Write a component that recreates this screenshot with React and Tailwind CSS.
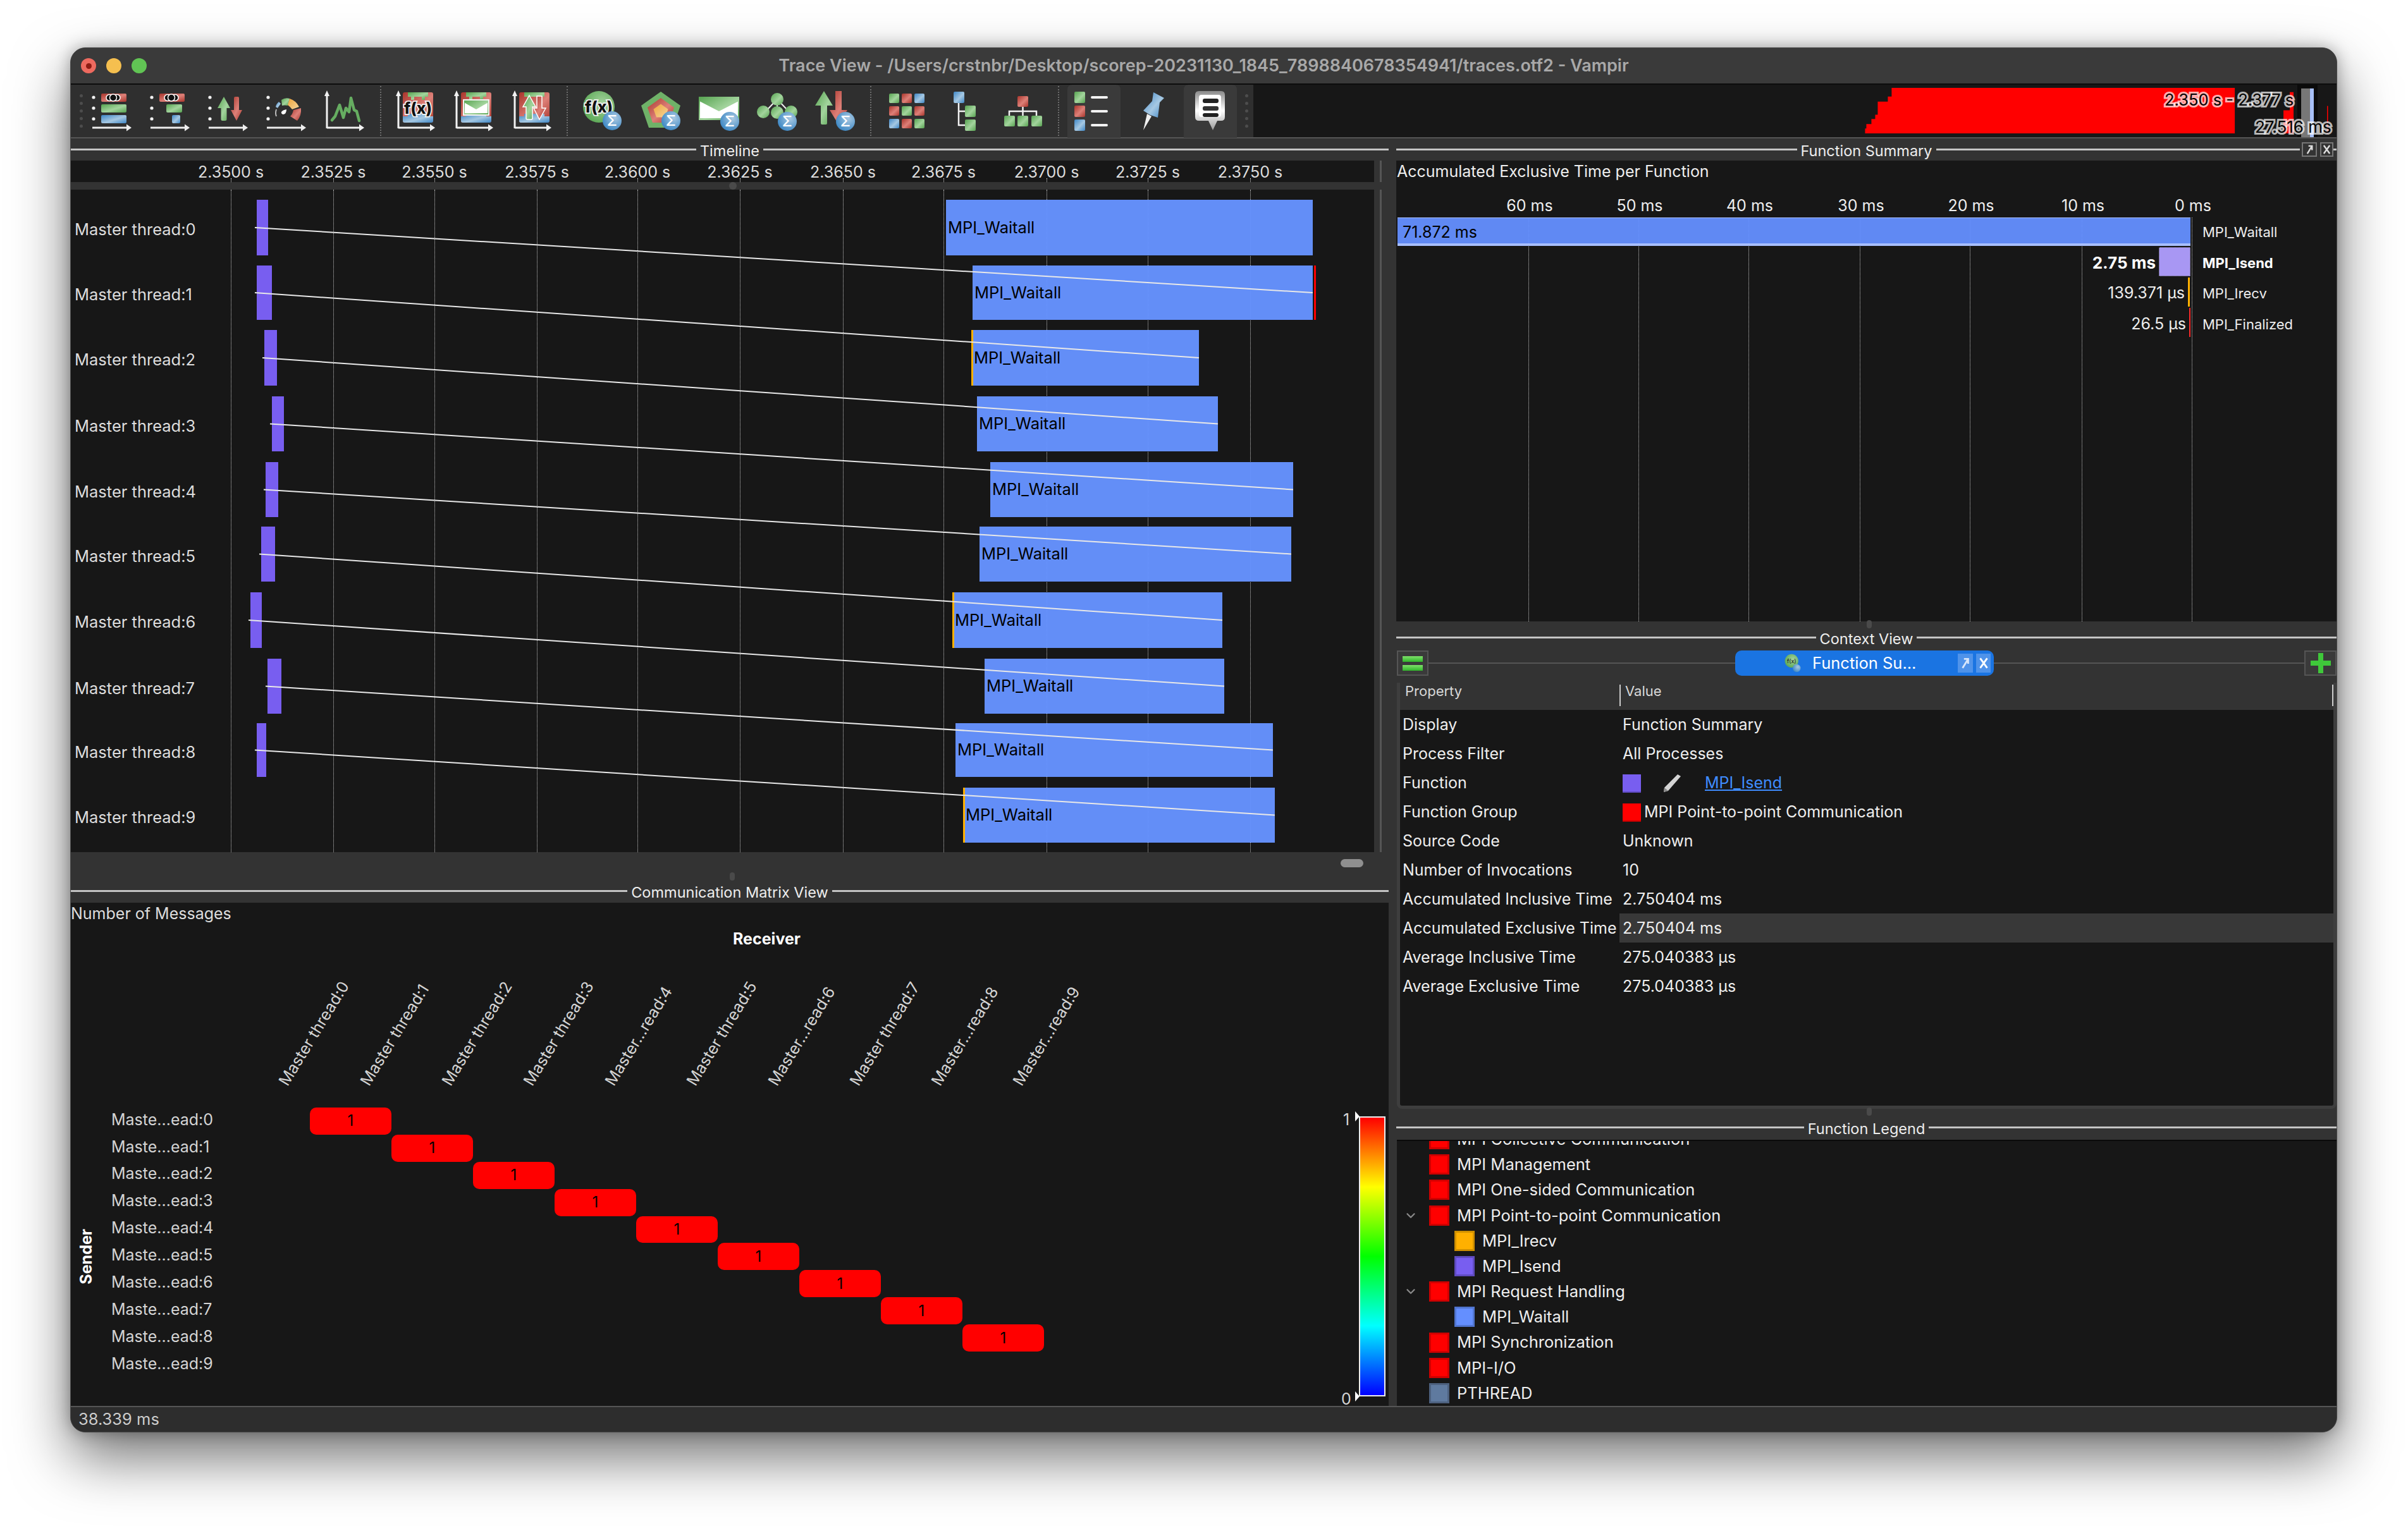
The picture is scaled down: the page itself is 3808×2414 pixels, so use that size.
import { ChevronDown } from 'lucide-react';

const TICKS = [
  ['2.3500 s', 365], ['2.3525 s', 527], ['2.3550 s', 687], ['2.3575 s', 849], ['2.3600 s', 1008], ['2.3625 s', 1170],
  ['2.3650 s', 1333], ['2.3675 s', 1492], ['2.3700 s', 1655], ['2.3725 s', 1815], ['2.3750 s', 1977],
];

// page x coordinates of the bars, y of each row
const THREADS = [
  { top: 316, bottom: 404, send: [406, 424], wait: [1496, 2076] },
  { top: 420, bottom: 506, send: [406, 430], wait: [1538, 2076], red: true },
  { top: 522, bottom: 610, send: [418, 438], wait: [1536, 1896], yellow: true },
  { top: 627, bottom: 714, send: [430, 449], wait: [1545, 1926] },
  { top: 731, bottom: 818, send: [420, 440], wait: [1566, 2045] },
  { top: 833, bottom: 920, send: [413, 435], wait: [1549, 2042] },
  { top: 937, bottom: 1025, send: [396, 414], wait: [1506, 1933], yellow: true },
  { top: 1042, bottom: 1129, send: [423, 445], wait: [1557, 1936] },
  { top: 1144, bottom: 1229, send: [406, 421], wait: [1511, 2013] },
  { top: 1246, bottom: 1333, wait: [1523, 2016], yellow: true },
];

const SUMMARY_TICKS = [['60 ms', 2417], ['50 ms', 2591], ['40 ms', 2765], ['30 ms', 2941], ['20 ms', 3115], ['10 ms', 3292], ['0 ms', 3466]];

const PROPERTIES = [
  ['Display', 'Function Summary'],
  ['Process Filter', 'All Processes'],
  ['Function', 'function'],
  ['Function Group', 'group'],
  ['Source Code', 'Unknown'],
  ['Number of Invocations', '10'],
  ['Accumulated Inclusive Time', '2.750404 ms'],
  ['Accumulated Exclusive Time', '2.750404 ms'],
  ['Average Inclusive Time', '275.040383 µs'],
  ['Average Exclusive Time', '275.040383 µs'],
];

const LEGEND = [
  { name: 'MPI Management', swatch: 'border-[#d00000] bg-[#ff0000]' },
  { name: 'MPI One-sided Communication', swatch: 'border-[#d00000] bg-[#ff0000]' },
  { name: 'MPI Point-to-point Communication', swatch: 'border-[#d00000] bg-[#ff0000]', open: true },
  { name: 'MPI_Irecv', swatch: 'border-[#d09000] bg-[#ffb000]', child: true },
  { name: 'MPI_Isend', swatch: 'border-[#5f4bc0] bg-[#785ef0]', child: true },
  { name: 'MPI Request Handling', swatch: 'border-[#d00000] bg-[#ff0000]', open: true },
  { name: 'MPI_Waitall', swatch: 'border-[#5075d0] bg-[#648fff]', child: true },
  { name: 'MPI Synchronization', swatch: 'border-[#d00000] bg-[#ff0000]' },
  { name: 'MPI-I/O', swatch: 'border-[#d00000] bg-[#ff0000]' },
  { name: 'PTHREAD', swatch: 'border-[#4d617f] bg-[#5f7a9f]' },
];

const COLUMN_LABELS = ['Master thread:0', 'Master thread:1', 'Master thread:2', 'Master thread:3', 'Master...read:4', 'Master thread:5', 'Master...read:6', 'Master thread:7', 'Master...read:8', 'Master...read:9'];

const Gradients = () => (
  <svg className="absolute h-0 w-0">
    <defs>
      <linearGradient id="g-red" x1="0" y1="0" x2="1" y2="1">
        <stop offset="0" stopColor="#a9352c" /><stop offset="0.55" stopColor="#dd8078" /><stop offset="1" stopColor="#a9352c" />
      </linearGradient>
      <linearGradient id="g-green" x1="0" y1="0" x2="1" y2="1">
        <stop offset="0" stopColor="#56a350" /><stop offset="0.55" stopColor="#a3d49d" /><stop offset="1" stopColor="#56a350" />
      </linearGradient>
      <linearGradient id="g-blue" x1="0" y1="0" x2="1" y2="1">
        <stop offset="0" stopColor="#3d86c6" /><stop offset="0.55" stopColor="#a6c8e2" /><stop offset="1" stopColor="#3d86c6" />
      </linearGradient>
      <linearGradient id="g-orange" x1="0" y1="0" x2="1" y2="1">
        <stop offset="0" stopColor="#f0a63c" /><stop offset="1" stopColor="#f5d49a" />
      </linearGradient>
      <linearGradient id="g-bubble" x1="0" y1="0" x2="0" y2="1">
        <stop offset="0" stopColor="#8a8a8a" /><stop offset="0.5" stopColor="#ffffff" /><stop offset="1" stopColor="#9a9a9a" />
      </linearGradient>
      <radialGradient id="g-sigma" cx="0.65" cy="0.35" r="0.8">
        <stop offset="0" stopColor="#a9c9e2" /><stop offset="1" stopColor="#2f7fc0" />
      </radialGradient>
      <radialGradient id="g-ball" cx="0.6" cy="0.4" r="0.7">
        <stop offset="0" stopColor="#a5d49f" /><stop offset="1" stopColor="#55a44f" />
      </radialGradient>
    </defs>
  </svg>
);

const Block = ({ x, y, w, h, c }) => <rect x={x} y={y} width={w} height={h} rx="2" fill={`url(#g-${c})`} />;

const Dots = () => (
  <g fill="#f2f2f2">
    <circle cx="16" cy="20" r="2.6" /><circle cx="16" cy="37" r="2.6" /><circle cx="16" cy="54" r="2.6" />
  </g>
);

const TimeArrow = () => (
  <g fill="#eeeeee">
    <rect x="14" y="66.5" width="56" height="3" />
    <polygon points="68,62.5 76,68 68,73.5" />
  </g>
);

const Axes = ({ x = 17 }) => (
  <g fill="#f2f2f2">
    <rect x={x - 1.5} y="14" width="3" height="55" />
    <polygon points={`${x - 4},18 ${x},9 ${x + 4},18`} />
    <rect x={x} y="66.5" width={54} height="3" />
    <polygon points="68,62.5 76,68 68,73.5" />
  </g>
);

const Fx = ({ x, y, size = 25 }) => (
  <text x={x} y={y} textAnchor="middle" fontSize={size} fontWeight="800" fill="#111" stroke="#f4f4f4" strokeWidth="3.5" paintOrder="stroke">f(x)</text>
);

const Sigma = ({ x, y }) => (
  <g>
    <circle cx={x} cy={y} r="15" fill="url(#g-sigma)" />
    <text x={x} y={y + 8} textAnchor="middle" fontSize="23" fontWeight="500" fill="#ffffff">Σ</text>
  </g>
);

const Envelope = ({ x, y, w, h, border }) => (
  <g>
    <rect x={x} y={y} width={w} height={h} fill="url(#g-green)" stroke={border} strokeWidth={border ? 2 : 0} />
    <polygon points={`${x + 2},${y + h * 0.2} ${x + w / 2},${y + h * 0.62} ${x + w - 2},${y + h * 0.2} ${x + w - 2},${y + h - 3} ${x + 2},${y + h - 3}`} fill="#ffffff" />
  </g>
);

const Castle = () => (
  <g>
    <rect x="25" y="12" width="48" height="48" rx="3" fill="url(#g-red)" />
    <path d="M33 12H65V19H60V24H55V19H43V24H38V19H33Z" fill="url(#g-green)" />
    <path d="M25 50H33V46H65V50H73V57Q73 60 70 60H28Q25 60 25 57Z" fill="url(#g-blue)" />
  </g>
);

const ICONS = {
  timeline: (
    <g>
      <Dots /><TimeArrow />
      <Block x="28" y="14" w="40" h="13" c="red" /><Block x="28" y="31" w="40" h="13" c="green" /><Block x="28" y="48" w="40" h="13" c="blue" />
      <g stroke="#fff" strokeWidth="1.5" fill="#111"><circle cx="41" cy="20.5" r="5" /><circle cx="53" cy="20.5" r="5" /><circle cx="47" cy="20.5" r="5.5" /></g>
    </g>
  ),
  process: (
    <g>
      <Dots /><TimeArrow />
      <Block x="28" y="14" w="40" h="13" c="red" /><Block x="39" y="31" w="25" h="13" c="green" /><Block x="48" y="48" w="13" h="13" c="blue" />
      <g stroke="#fff" strokeWidth="1.5" fill="#111"><circle cx="41" cy="20.5" r="5" /><circle cx="53" cy="20.5" r="5" /><circle cx="47" cy="20.5" r="5.5" /></g>
    </g>
  ),
  messages: (
    <g>
      <Dots /><TimeArrow />
      <path d="M38 19L48 37H42.5V55Q42.5 57 40 57H36Q33.5 57 33.5 55V37H28Z" fill="url(#g-green)" />
      <path d="M54 21Q54 19 56 19H60Q62 19 62 21V40H67L58 57L49 40H54Z" fill="url(#g-red)" />
    </g>
  ),
  summary: (
    <g>
      <Dots /><TimeArrow />
      <path d="M37 24Q43 20 50 22L47 33Q42 32 38 33Z" fill="url(#g-green)" />
      <path d="M50 22Q60 25 65 35L54 39Q51 35 47 32Z" fill="url(#g-orange)" />
      <path d="M56 40L68 37Q69 49 62 57L51 50Q55 46 56 40Z" fill="url(#g-red)" />
      <path d="M33 27L36 30L31 37L28 35Q29 30 33 27Z" fill="url(#g-blue)" />
      <path d="M29 39Q27 45 29 50" stroke="#bbbbbb" strokeWidth="2" fill="none" />
      <path d="M45 39Q45 46 40 47Q36 46 37 43Q39 40 45 39Z" fill="#ffffff" />
    </g>
  ),
  counter: (
    <g>
      <Axes />
      <polyline points="25,56 30,50 37,32 43,52 47,37 52,43 55,21 60,40 64,42 68,57" fill="none" stroke="#66ad61" strokeWidth="4.5" strokeLinejoin="round" strokeLinecap="round" />
    </g>
  ),
  fnChart: (
    <g>
      <Castle /><Axes x={18} /><Fx x={49} y={46} />
    </g>
  ),
  msgChart: (
    <g>
      <Castle /><Axes x={18} /><Envelope x={29} y={24} w={40} h={24} border="#f2f2f2" />
    </g>
  ),
  ioChart: (
    <g>
      <Castle /><Axes x={18} />
      <path d="M41 17L51 35H46V53Q46 55 44 55H38Q36 55 36 53V35H31Z" fill="url(#g-green)" stroke="#fff" strokeWidth="1.5" />
      <path d="M53 18H61V37H67L57 55L48 37H53Z" fill="url(#g-red)" stroke="#fff" strokeWidth="1.5" />
    </g>
  ),
  fnSummary: (
    <g>
      <circle cx="41" cy="35" r="25" fill="url(#g-ball)" /><Fx x={41} y={44} /><Sigma x={62} y={57} />
    </g>
  ),
  groupSummary: (
    <g>
      <polygon points="47,11 78,33 66,68 28,68 16,33" fill="#6fb268" />
      <polygon points="47,21 68,36 60,60 34,60 26,36" fill="url(#g-red)" />
      <polygon points="47,30.5 58.5,38.7 54,51.6 40,51.6 35.5,38.7" fill="url(#g-orange)" />
      <Sigma x={63} y={57} />
    </g>
  ),
  msgSummary: (
    <g>
      <Envelope x={15} y={19} w={64} h={37} /><Sigma x={64} y={58} />
    </g>
  ),
  commSummary: (
    <g>
      <path d="M47 23L27 44M47 23L67 44M47 23V44" stroke="#f2f2f2" strokeWidth="2" />
      <circle cx="47" cy="23" r="10" fill="url(#g-green)" /><circle cx="25" cy="43" r="10" fill="url(#g-green)" />
      <circle cx="47" cy="44" r="10" fill="url(#g-green)" /><circle cx="69" cy="43" r="10" fill="url(#g-green)" />
      <Sigma x={63} y={58} />
    </g>
  ),
  ioSummary: (
    <g>
      <path d="M29 10L43 33H34V61Q34 63 32 63H26Q24 63 24 61V33H15Z" fill="url(#g-green)" />
      <path d="M47 10H57V40H66L52 63L38 40H47Z" fill="url(#g-red)" />
      <Sigma x={63} y={58} />
    </g>
  ),
  matrix: (
    <g>
      <Block x="18" y="14" w="16" h="15" c="green" /><Block x="38" y="14" w="16" h="15" c="red" /><Block x="58" y="14" w="16" h="15" c="blue" />
      <Block x="18" y="34" w="16" h="15" c="red" /><Block x="38" y="34" w="16" h="15" c="green" /><Block x="58" y="34" w="16" h="15" c="red" />
      <Block x="18" y="54" w="16" h="15" c="blue" /><Block x="38" y="54" w="16" h="15" c="red" /><Block x="58" y="54" w="16" h="15" c="green" />
    </g>
  ),
  tree: (
    <g>
      <path d="M36 28V64H47M36 42H47" stroke="#f2f2f2" strokeWidth="2.5" fill="none" />
      <Block x="28" y="11" w="17" h="18" c="blue" /><Block x="46" y="33" w="17" h="18" c="green" /><Block x="46" y="55" w="17" h="18" c="green" />
    </g>
  ),
  hierarchy: (
    <g>
      <path d="M45.5 34V50M24 50V42H67V50" stroke="#f2f2f2" strokeWidth="2.5" fill="none" />
      <Block x="37" y="18" w="17" h="17" c="red" />
      <Block x="16" y="49" w="17" h="17" c="green" /><Block x="37" y="49" w="17" h="17" c="green" /><Block x="59" y="49" w="17" h="17" c="green" />
    </g>
  ),
  legend: (
    <g>
      <Block x="15" y="11" w="17" h="18" c="green" /><Block x="15" y="33" w="17" h="18" c="red" /><Block x="15" y="55" w="17" h="18" c="blue" />
      <g stroke="#f2f2f2" strokeWidth="4" strokeLinecap="round"><path d="M43 20H66M43 42H66M43 64H66" /></g>
    </g>
  ),
  pin: (
    <g>
      <polygon points="38,46 45,50 32,72" fill="#f0f0f0" />
      <path d="M48 12L65 21L58 28L55 52L43 48L32 41L46 26Z" fill="url(#g-blue)" />
    </g>
  ),
  context: (
    <g>
      <path d="M28 10H63Q69 10 69 16V51Q69 57 63 57H57L50 72L43 57H28Q22 57 22 51V16Q22 10 28 10Z" fill="url(#g-bubble)" />
      <rect x="28" y="16" width="35" height="35" rx="4" fill="#ffffff" />
      <rect x="34" y="22" width="25" height="7" rx="3" fill="#222" /><rect x="34" y="34" width="25" height="7" rx="3" fill="#333" /><rect x="34" y="45" width="25" height="6" rx="3" fill="#222" />
    </g>
  ),
};

const ToolIcon = ({ name, active }) => (
  <svg viewBox="0 0 92 84" className="h-[84px] w-[92px] shrink-0">
    {active && <path d="M4 84V8Q4 0 12 0H80Q88 0 88 8V84Z" fill="#3a3a3a" />}
    {ICONS[name]}
  </svg>
);

const ToolSep = ({ width }) => (
  <div className={`flex h-full shrink-0 justify-center py-[2px] ${width}`}>
    <div className="h-full border-l-2 border-dotted border-[#6b6b6b]" />
  </div>
);

const Grip = ({ className }) => (
  <div className={`flex shrink-0 flex-col items-center justify-center gap-[7px] ${className}`}>
    {[0, 1, 2, 3, 4].map((i) => <div key={i} className="h-[5px] w-[5px] rounded-full bg-[#4d4d4d]" />)}
  </div>
);

const MiniMap = () => (
  <div className="relative h-full flex-1 bg-[#171717]">
    <svg viewBox="0 0 1714 84" preserveAspectRatio="none" className="h-full w-full">
      <path d="M968 78V70H970V63H978V55H984V48H988V27H1004V19H1010V5H1553V78Z" fill="#ff0000" />
      <path d="M1630 78V41H1640V12H1646V78Z" fill="#ff0000" />
      <rect x="1652" y="0" width="32" height="84" fill="#0b0b0b" />
      <rect x="1658" y="6" width="14" height="78" fill="#777777" />
      <rect x="1672" y="6" width="6" height="78" fill="#a8c0f8" />
      <rect x="1699" y="34" width="1.5" height="44" fill="#ff0000" />
    </svg>
    <span className="absolute left-[1441px] top-[10px] whitespace-nowrap text-[25.5px] leading-[28px] text-black [-webkit-text-stroke:6px_rgba(255,255,255,0.7)] [paint-order:stroke_fill]">2.350 s - 2.377 s</span>
    <span className="absolute left-[1584px] top-[53px] whitespace-nowrap text-[26px] leading-[28px] text-black [-webkit-text-stroke:6px_rgba(255,255,255,0.7)] [paint-order:stroke_fill]">27.516 ms</span>
  </div>
);

const Toolbar = () => (
  <div className="flex h-[85px] items-start border-b-2 border-[#555] bg-[#2f2f2f]">
    <Grip className="h-full w-[20px] pl-[12px]" />
    <ToolIcon name="timeline" /><ToolIcon name="process" /><ToolIcon name="messages" /><ToolIcon name="summary" /><ToolIcon name="counter" />
    <ToolSep width="w-[20px]" />
    <ToolIcon name="fnChart" /><ToolIcon name="msgChart" /><ToolIcon name="ioChart" />
    <ToolSep width="w-[18px]" />
    <ToolIcon name="fnSummary" /><ToolIcon name="groupSummary" /><ToolIcon name="msgSummary" /><ToolIcon name="commSummary" /><ToolIcon name="ioSummary" />
    <ToolSep width="w-[22px]" />
    <ToolIcon name="matrix" /><ToolIcon name="tree" /><ToolIcon name="hierarchy" />
    <ToolSep width="w-[20px]" />
    <ToolIcon name="legend" active /><ToolIcon name="pin" /><ToolIcon name="context" active />
    <Grip className="h-full w-[22px]" />
    <MiniMap />
  </div>
);

const PaneHeader = ({ title }) => (
  <div className="flex h-[35px] items-center gap-[6px] text-[23.5px] text-[#eeeeee]">
    <div className="h-[3px] flex-1 bg-[#c4c4c4]" />
    <span className="whitespace-nowrap pt-[4px]">{title}</span>
    <div className="h-[3px] flex-1 bg-[#c4c4c4]" />
  </div>
);

const SplitDot = () => <div className="absolute left-1/2 top-[-2px] h-[13px] w-[8px] rounded-full bg-[#4a4a4a]" />;

// small float/close glyphs, used on the pane header and on the tab
const FloatGlyph = ({ className }) => (
  <svg viewBox="0 0 16 20" className={className}>
    <path d="M4 17L12 4M6 4H12V11" fill="none" stroke="currentColor" strokeWidth="2.6" />
  </svg>
);

const CloseGlyph = ({ className }) => (
  <svg viewBox="0 0 16 20" className={className}>
    <path d="M3 3L13 17M13 3L3 17" fill="none" stroke="currentColor" strokeWidth="2.6" />
  </svg>
);

const Timeline = () => {
  const lines = THREADS.slice(0, 9).map((t, i) => {
    const next = THREADS[i + 1];
    return {
      x1: t.send[0] - 3 - 112,
      y1: (t.top + t.bottom) / 2 - 300,
      x2: next.wait[1] - 112,
      y2: (next.top + next.bottom) / 2 - 300,
    };
  });

  return (
    <div className="relative h-[1048px] w-[2061px] overflow-hidden bg-[#171717]">
      {TICKS.map(([label, x]) => (
        <div key={label} className="absolute bottom-0 top-0 border-l border-dotted border-[#c8c8c8]" style={{ left: x - 112 }} />
      ))}
      {THREADS.map((t, i) => (
        <div key={i}>
          <div className="absolute left-[6px] -translate-y-1/2 whitespace-nowrap text-[25.5px] text-[#dddddd]" style={{ top: (t.top + t.bottom) / 2 + 3 - 300 }}>
            Master thread:{i}
          </div>
          {t.send && (
            <div className="absolute bg-[#785ef0]" style={{ left: t.send[0] - 112, width: t.send[1] - t.send[0], top: t.top - 300, height: t.bottom - t.top }} />
          )}
          <div
            className={`absolute flex items-center bg-[#6693ff]/97 text-[25.5px] text-black ${t.yellow ? 'border-l-[3px] border-[#ffb000] pl-[1px]' : 'pl-[3px]'}`}
            style={{ left: t.wait[0] - 112, width: t.wait[1] - t.wait[0], top: t.top - 300, height: t.bottom - t.top }}
          >
            MPI_Waitall
          </div>
          {t.red && <div className="absolute w-[3px] bg-[#ff0000]" style={{ left: t.wait[1] + 2 - 112, top: t.top - 300, height: t.bottom - t.top }} />}
        </div>
      ))}
      <svg className="absolute left-0 top-0 h-full w-full">
        {lines.map((l, i) => <line key={i} x1={l.x1} y1={l.y1} x2={l.x2} y2={l.y2} stroke="#e8e8e8" strokeWidth="2" />)}
      </svg>
    </div>
  );
};

const VerticalStrip = () => (
  <div className="h-full w-[23px] pl-[9px]">
    <div className="h-full w-[3px] bg-[#555]" />
  </div>
);

const TimelinePane = () => (
  <div>
    <PaneHeader title="Timeline" />
    <div className="flex h-[34px]">
      <div className="relative h-full w-[2061px] bg-[#171717] text-[25px] text-[#dddddd]">
        {TICKS.map(([label, x]) => (
          <div key={label}>
            <div className="absolute top-0 -translate-x-1/2 whitespace-nowrap" style={{ left: x - 112 }}>{label}</div>
            <div className="absolute bottom-0 h-[6px] border-l border-dotted border-[#d8d8d8]" style={{ left: x - 112 }} />
          </div>
        ))}
      </div>
      <VerticalStrip />
    </div>
    <div className="relative h-[12px] bg-[#333333]">
      <div className="absolute left-[1041px] top-0 h-[12px] w-[12px] rounded-full bg-[#4a4a4a]" />
    </div>
    <div className="flex h-[1048px]">
      <Timeline />
      <VerticalStrip />
    </div>
    <div className="flex h-[34px] items-center justify-end pr-[40px]">
      <div className="h-[13px] w-[36px] rounded-full bg-[#8f8f8f]" />
    </div>
  </div>
);

const MatrixPane = () => (
  <div className="relative">
    <SplitDot />
    <div className="h-[46px] pt-[10px]">
      <PaneHeader title="Communication Matrix View" />
    </div>
    <div className="relative h-[796px] bg-[#171717] text-[#d4d4d4]">
      <div className="h-[34px] text-[25px] leading-[34px] text-[#dddddd]">Number of Messages</div>
      <div className="h-[46px] pl-[1047px] pt-[6px] text-[25px] font-bold leading-[34px] text-white">Receiver</div>
      <div className="flex h-[208px] pl-[378px]">
        {COLUMN_LABELS.map((label) => (
          <div key={label} className="relative h-full w-[129px] shrink-0">
            <span className="absolute bottom-[-6px] left-[-31px] origin-bottom-left rotate-[-58.5deg] whitespace-nowrap text-[25px] leading-[28px]">{label}</span>
          </div>
        ))}
      </div>
      <div className="flex pt-[36px]">
        <div className="flex w-[64px] items-center justify-center pr-[14px] pt-[42px]">
          <span className="rotate-180 text-[25px] font-bold text-white [writing-mode:vertical-rl]">Sender</span>
        </div>
        <div className="-mt-[2px] w-[314px] text-[25px]">
          {Array.from({ length: 10 }, (_, i) => (
            <div key={i} className="flex h-[42.9px] items-center">Maste...ead:{i}</div>
          ))}
        </div>
        <div className="grid grid-cols-[repeat(9,129px)] grid-rows-[repeat(10,42.9px)]">
          {Array.from({ length: 9 }, (_, i) => (
            <div
              key={i}
              className="flex items-center justify-center rounded-[10px] bg-[#ff0000] text-[24px] text-black"
              style={{ gridColumn: i + 1, gridRow: i + 1 }}
            >
              1
            </div>
          ))}
        </div>
      </div>
      <div className="absolute left-[2037px] top-[338px] h-[443px] w-[42px] border-2 border-[#eeeeee] bg-[linear-gradient(to_bottom,#ff0000,#ffff00_25%,#00ff00_50%,#00ffff_75%,#0000ff)]" />
      <div className="absolute left-[2031px] top-[330px] h-0 w-0 border-y-[8px] border-l-[7px] border-y-transparent border-l-white" />
      <div className="absolute left-[2031px] top-[773px] h-0 w-0 border-y-[8px] border-l-[7px] border-y-transparent border-l-white" />
      <div className="absolute left-[2012px] top-[328px] text-[25px] leading-[30px]">1</div>
      <div className="absolute left-[2009px] top-[770px] text-[25px] leading-[30px]">0</div>
    </div>
  </div>
);

const FunctionSummary = () => (
  <div className="relative h-[729px] bg-[#171717] text-[25px] leading-[34px] text-[#eeeeee]">
    <div className="pl-[1px]">Accumulated Exclusive Time per Function</div>
    {SUMMARY_TICKS.map(([label, x]) => (
      <div key={label}>
        <div className="absolute top-[54px] -translate-x-1/2 whitespace-nowrap" style={{ left: x - 2208 + 2 }}>{label}</div>
        <div className="absolute bottom-0 top-[90px] border-l border-dotted border-[#c8c8c8]" style={{ left: x - 2208 }} />
      </div>
    ))}
    <div className="absolute left-[2px] top-[90px] flex h-[45px] w-[1254px] items-center border-b-4 border-t border-[#a8bfff] bg-[#648fff]/95 pl-[8px] pt-[3px] text-black">71.872 ms</div>
    <div className="absolute left-[1206px] top-[137px] h-[46px] w-[50px] border border-dotted border-[#555] bg-[#a897f3]" />
    <div className="absolute left-[1252px] top-[185px] h-[46px] w-[3px] bg-[#ffb000]" />
    <div className="absolute left-[1254px] top-[233px] h-[46px] w-[2px] bg-[#ff2a2a]" />
    <div className="absolute right-[286px] top-[145px] whitespace-nowrap text-[26px] font-bold text-white">2.75 ms</div>
    <div className="absolute right-[240px] top-[192px] whitespace-nowrap">139.371 µs</div>
    <div className="absolute right-[238px] top-[241px] whitespace-nowrap">26.5 µs</div>
    <div className="absolute left-[1275px] top-[96px] text-[22px]">MPI_Waitall</div>
    <div className="absolute left-[1275px] top-[145px] text-[22px] font-bold text-white">MPI_Isend</div>
    <div className="absolute left-[1275px] top-[193px] text-[22px]">MPI_Irecv</div>
    <div className="absolute left-[1275px] top-[242px] text-[22px]">MPI_Finalized</div>
  </div>
);

const TabBar = () => (
  <div className="ml-[1px] flex h-[40px] items-center">
    <div className="flex h-full w-[50px] shrink-0 flex-col items-center justify-center gap-[5px] border-2 border-[#555] bg-[#3a3a3a]">
      <div className="h-[9px] w-[32px] bg-[linear-gradient(to_bottom,#7fe06a,#2fb52a)]" />
      <div className="h-[9px] w-[32px] bg-[linear-gradient(to_bottom,#7fe06a,#2fb52a)]" />
    </div>
    <div className="h-[2px] w-[485px] bg-[#555]" />
    <div className="flex h-full w-[409px] shrink-0 items-center rounded-[10px] bg-[#1a74e2] pl-[78px] text-[25.5px] text-white">
      <svg viewBox="0 0 28 36" className="h-[32px] w-[26px] shrink-0">
        <circle cx="12" cy="14" r="12" fill="url(#g-ball)" />
        <text x="12" y="18" textAnchor="middle" fontSize="10" fill="#111">f(x)</text>
        <circle cx="21" cy="27" r="7" fill="url(#g-sigma)" />
      </svg>
      <span className="ml-[18px] w-[230px] whitespace-nowrap">Function Su...</span>
      <div className="flex h-[30px] w-[24px] items-center justify-center bg-[#4f93ea] text-[#d8e6fa]"><FloatGlyph className="h-[22px] w-[18px]" /></div>
      <div className="ml-[5px] flex h-[30px] w-[23px] items-center justify-center bg-[#4f93ea] text-white"><CloseGlyph className="h-[22px] w-[18px]" /></div>
    </div>
    <div className="h-[2px] flex-1 bg-[#555]" />
    <div className="flex h-full w-[51px] shrink-0 items-center justify-center border-2 border-[#555] bg-[#3a3a3a]">
      <svg viewBox="0 0 36 36" className="h-[36px] w-[36px]">
        <path d="M14 2H22V14H34V22H22V34H14V22H2V14H14Z" fill="#3fc83a" />
      </svg>
    </div>
  </div>
);

const PropertyValue = ({ value }) => {
  if (value === 'function') {
    return (
      <div className="flex items-center">
        <div className="h-[29px] w-[29px] border-b-2 border-[#5f4bc0] bg-[#785ef0]" />
        <svg viewBox="0 0 30 30" className="ml-[34px] h-[30px] w-[30px]">
          <path d="M24 1L29 4L9 27L2 29L3 22Z" fill="#d4d4d4" />
          <path d="M3 22L9 27L2 29Z" fill="#8a8a8a" />
        </svg>
        <span className="ml-[37px] text-[#3f8cff] underline underline-offset-2">MPI_Isend</span>
      </div>
    );
  }
  if (value === 'group') {
    return (
      <div className="flex items-center gap-[5px]">
        <div className="h-[29px] w-[29px] border-b-2 border-[#c00000] bg-[#ff0000]" />
        <span>MPI Point-to-point Communication</span>
      </div>
    );
  }
  return <span>{value}</span>;
};

const ContextView = () => (
  <div className="relative">
    <SplitDot />
    <div className="h-[46px] pt-[8px]">
      <PaneHeader title="Context View" />
    </div>
    <TabBar />
    <div className="ml-[1px] mt-[11px] h-[674px] rounded-b-[8px] border-x-[5px] border-b-[5px] border-[#3e3e3e] bg-[#171717] text-[25px] text-[#eeeeee]">
      <div className="flex h-[43px] bg-[#333333] text-[22px] leading-[26px] text-[#d8d8d8]">
        <div className="w-[347px] pl-[8px]">Property</div>
        <div className="mt-[3px] h-[34px] flex-1 border-x-2 border-[#cccccc] pl-[7px] leading-[20px]">Value</div>
      </div>
      {PROPERTIES.map(([name, value], i) => (
        <div key={name} className="flex h-[46px] items-center">
          <div className="w-[347px] whitespace-nowrap pl-[4px] pt-[2px]">{name}</div>
          <div className={`flex h-full flex-1 items-center pl-[5px] pt-[2px] ${i === 7 ? 'bg-[#383838]' : ''}`}>
            <PropertyValue value={value} />
          </div>
        </div>
      ))}
    </div>
  </div>
);

const Legend = () => (
  <div className="relative">
    <SplitDot />
    <div className="h-[49px] pt-[12px]">
      <PaneHeader title="Function Legend" />
    </div>
    <div className="ml-[1px] h-[421px] overflow-hidden border-t-2 border-[#0a0a0a] bg-[#171717] text-[25.5px] text-[#eeeeee]">
      <div className="-mt-[23px]">
        <div className="flex h-[40.2px] items-center pl-[51px]">
          <div className="h-[32px] w-[32px] shrink-0 border-[3px] border-[#d00000] bg-[#ff0000]" />
          <span className="ml-[12px]">MPI Collective Communication</span>
        </div>
        {LEGEND.map((row) => (
          <div key={row.name} className={`flex h-[40.2px] items-center ${row.child ? 'pl-[91px]' : 'pl-[51px]'}`}>
            {row.open && <ChevronDown className="-ml-[40px] mr-[18px] h-[22px] w-[22px] text-[#8a8a8a]" strokeWidth={2.5} />}
            <div className={`h-[32px] w-[32px] shrink-0 border-[3px] ${row.swatch}`} />
            <span className="ml-[12px]">{row.name}</span>
          </div>
        ))}
      </div>
    </div>
  </div>
);

const SummaryPane = () => (
  <div className="relative">
    <PaneHeader title="Function Summary" />
    <div className="absolute right-[5px] top-[6px] flex gap-[5px] bg-[#333333] pl-[3px]">
      <div className="flex h-[23px] w-[24px] items-center justify-center border-2 border-[#777] text-[#dddddd]"><FloatGlyph className="h-[19px] w-[15px]" /></div>
      <div className="flex h-[23px] w-[21px] items-center justify-center border-2 border-[#777] text-[#dddddd]"><CloseGlyph className="h-[19px] w-[15px]" /></div>
    </div>
    <FunctionSummary />
  </div>
);

const App = () => (
  <div className="h-[2414px] w-[3808px] overflow-hidden bg-white pl-[111px] pt-[75px] [font-family:Inter,sans-serif]">
    <Gradients />
    <div className="flex h-[2191px] w-[3585px] flex-col overflow-hidden rounded-[24px] border border-[#4a4a4a] bg-[#333333] shadow-[0_40px_90px_rgba(0,0,0,0.55),0_0_24px_rgba(0,0,0,0.3)]">
      <div className="grid h-[58px] shrink-0 grid-cols-[1fr_auto_1fr] items-center border-b-2 border-[#0c0c0c] bg-[#3a3a3a]">
        <div className="flex gap-[16px] pl-[16px]">
          <div className="flex h-[24px] w-[24px] items-center justify-center rounded-full bg-[#ee6a5f]">
            <div className="h-[9px] w-[9px] rounded-full bg-[#8e1b12]" />
          </div>
          <div className="h-[24px] w-[24px] rounded-full bg-[#f5bf4f]" />
          <div className="h-[24px] w-[24px] rounded-full bg-[#61c454]" />
        </div>
        <div className="whitespace-nowrap text-[27px] font-semibold text-[#a8a8a8]">
          Trace View - /Users/crstnbr/Desktop/scorep-20231130_1845_7898840678354941/traces.otf2 - Vampir
        </div>
        <div />
      </div>
      <Toolbar />
      <div className="flex h-[2005px] shrink-0">
        <div className="w-[2084px] shrink-0">
          <TimelinePane />
          <MatrixPane />
        </div>
        <div className="flex-1 pl-[12px]">
          <SummaryPane />
          <ContextView />
          <Legend />
        </div>
      </div>
      <div className="flex h-[41px] shrink-0 items-center border-t-2 border-[#555] bg-[#2d2d2d] pl-[12px] text-[25.5px] text-[#cccccc]">38.339 ms</div>
    </div>
  </div>
);

export default App;
